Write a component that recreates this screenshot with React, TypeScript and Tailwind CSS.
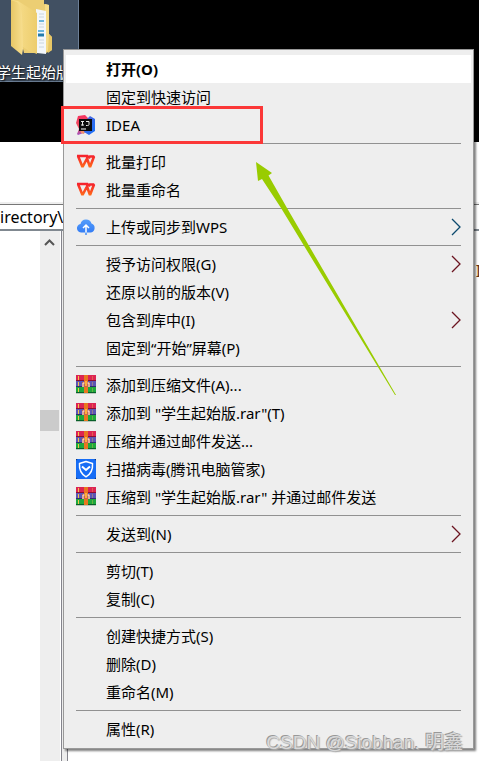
import { Fragment } from "react";
import type { ComponentType } from "react";

function IdeaIcon() {
  return (
    <svg viewBox="0 0 20 20" className="h-5 w-5" aria-hidden>
      <defs>
        <linearGradient id="idea-left" x1="0" y1="0" x2="0" y2="1">
          <stop offset="0" stopColor="#f5315f" />
          <stop offset="0.6" stopColor="#f0525f" />
          <stop offset="1" stopColor="#a04fc0" />
        </linearGradient>
        <linearGradient id="idea-right" x1="0" y1="0" x2="1" y2="1">
          <stop offset="0" stopColor="#5a62d8" />
          <stop offset="1" stopColor="#1372fb" />
        </linearGradient>
      </defs>
      <path d="M2 1 9 0l5 5-4 12-8 3-1-1 2-5-3-6z" fill="url(#idea-left)" />
      <path d="M4 15l5 1-1 3-3-1z" fill="#f3906c" />
      <path d="M11 4l3-3 5 3v12l-6 4-5-3z" fill="url(#idea-right)" />
      <rect x="3" y="4" width="13" height="12" fill="#0b0b0d" />
      <path
        d="M5 6.500h3M6.500 6v4.500M5 10h3M10 6.500h3v3q0 1-1.500 1H10"
        fill="none"
        stroke="#e8e8e8"
        strokeWidth="1"
      />
      <path d="M5 14h5" stroke="#fff" strokeWidth="1" />
    </svg>
  );
}

function WpsIcon() {
  return (
    <svg viewBox="0 0 20 20" className="h-5 w-5" aria-hidden>
      <defs>
        <linearGradient id="wps" x1="0" y1="0" x2="0" y2="1">
          <stop offset="0" stopColor="#f5222d" />
          <stop offset="1" stopColor="#ff6a1a" />
        </linearGradient>
      </defs>
      <path
        d="M1 4H12L11 6.500M2 4 6.500 15 11 6.500 14 15 18 4.500H13.500L12.800 6.500"
        fill="none"
        stroke="url(#wps)"
        strokeWidth="2.600"
        strokeLinejoin="bevel"
      />
    </svg>
  );
}

function CloudIcon() {
  return (
    <svg viewBox="0 0 20 20" className="h-5 w-5" aria-hidden>
      <defs>
        <linearGradient id="cloud" x1="0" y1="0" x2="0" y2="1">
          <stop offset="0" stopColor="#559dfb" />
          <stop offset="1" stopColor="#347df5" />
        </linearGradient>
      </defs>
      <path
        d="M6 15.500A4.300 4.300 0 0 1 4.500 7 5.700 5.700 0 0 1 15.500 6.500a4.700 4.700 0 0 1-0.500 9z"
        fill="url(#cloud)"
      />
      <path
        d="M10 16V8.500M7 11 10 8l3 3"
        fill="none"
        stroke="#fff"
        strokeWidth="1.500"
      />
      <path d="M10 15.500V18" stroke="#3f8cf9" strokeWidth="1.500" />
    </svg>
  );
}

function RarIcon() {
  return (
    <svg viewBox="0 0 20 20" className="h-5 w-5" aria-hidden>
      <rect y="0" width="20" height="6" fill="#dc2452" />
      <rect y="5" width="20" height="1" fill="#8f0d30" />
      <rect y="6" width="20" height="6" fill="#5d55b5" />
      <rect y="11" width="20" height="1" fill="#322c70" />
      <rect y="12" width="20" height="6" fill="#1fa83c" />
      <rect y="17" width="20" height="1" fill="#08602a" />
      <rect y="18" width="20" height="1" fill="#b9c8bd" />
      <path d="M2.500 1v4M2.500 7v4M2.500 13v4" stroke="#f3c64b" strokeWidth="1" />
      <path d="M16.500 1v4M16.500 7v4M16.500 13v4" stroke="#f3c64b" strokeWidth="1" opacity="0.35" />
      <rect x="8" width="4" height="18" fill="#e9761f" />
      <rect x="6" y="7" width="8" height="5" fill="#c9664a" />
      <path d="M7 12V8h1.500M11.500 8H13v4" fill="none" stroke="#f7f0ee" strokeWidth="1" />
      <path d="M10 6v5" stroke="#ffb03a" strokeWidth="2" />
    </svg>
  );
}

function ShieldIcon() {
  return (
    <svg viewBox="0 0 20 20" className="h-5 w-5" aria-hidden>
      <rect width="20" height="20" fill="#0b1d40" />
      <rect width="20" height="20" rx="2" fill="#176df5" />
      <path
        d="M10 2.500 16.500 4.500C17 11 15 15 10 17.800 5 15 3 11 3.500 4.500Z"
        fill="none"
        stroke="#fff"
        strokeWidth="1.500"
        strokeLinejoin="round"
      />
      <path
        d="M6 7.500 10 11 14 7.500"
        fill="none"
        stroke="#fff"
        strokeWidth="2"
      />
    </svg>
  );
}

function FolderIcon() {
  return (
    <svg viewBox="0 0 48 56" className="h-14 w-12 shrink-0" aria-hidden>
      <defs>
        <linearGradient id="folder-front" x1="0" y1="0" x2="1" y2="0">
          <stop offset="0" stopColor="#f9e192" />
          <stop offset="1" stopColor="#edcd6d" />
        </linearGradient>
        <linearGradient id="folder-side" x1="0" y1="0" x2="1" y2="0">
          <stop offset="0" stopColor="#e8c766" />
          <stop offset="1" stopColor="#f8df90" />
        </linearGradient>
      </defs>
      <path d="M1 0h33v4l5 1v29l3 3v13l-6 3H14z" fill="#ecce73" />
      <path d="M35 4l4 1v45l-4 2z" fill="#f6dc87" />
      <path d="M39 34l3 3v13l-4 3V50z" fill="#e8c766" />
      <path d="M26 9l10 2v43l-9-1z" fill="#f3f7fa" />
      <path
        d="M29 14h5M29 17h5M29 24h5M29 27h5M29 40h5M29 43h5M29 47h5"
        stroke="#c9d6e0"
        strokeWidth="1"
      />
      <path d="M29 21h5M28 31h6" stroke="#69b5dc" strokeWidth="2" />
      <path d="M28 35h6" stroke="#237cab" strokeWidth="3" />
      <path d="M1 0 8 1 27 13v41l-8-3-9-6z" fill="url(#folder-front)" />
      <path d="M1 0 7 2q4 4 5 13l1 34-1 6L1 46z" fill="url(#folder-side)" />
    </svg>
  );
}

interface MenuItem {
  label: string;
  icon?: ComponentType;
  submenu?: string;
  isDefault?: boolean;
}

const groups: MenuItem[][] = [
  [
    { label: "打开(O)", isDefault: true },
    { label: "固定到快速访问" },
    { label: "IDEA", icon: IdeaIcon },
  ],
  [
    { label: "批量打印", icon: WpsIcon },
    { label: "批量重命名", icon: WpsIcon },
  ],
  [{ label: "上传或同步到WPS", icon: CloudIcon, submenu: "text-[#0c4a6e]" }],
  [
    { label: "授予访问权限(G)", submenu: "text-[#6b1420]" },
    { label: "还原以前的版本(V)" },
    { label: "包含到库中(I)", submenu: "text-[#6b1420]" },
    { label: "固定到“开始”屏幕(P)" },
  ],
  [
    { label: "添加到压缩文件(A)...", icon: RarIcon },
    { label: '添加到 "学生起始版.rar"(T)', icon: RarIcon },
    { label: "压缩并通过邮件发送...", icon: RarIcon },
    { label: "扫描病毒(腾讯电脑管家)", icon: ShieldIcon },
    { label: '压缩到 "学生起始版.rar" 并通过邮件发送', icon: RarIcon },
  ],
  [{ label: "发送到(N)", submenu: "text-[#6b1420]" }],
  [{ label: "剪切(T)" }, { label: "复制(C)" }],
  [{ label: "创建快捷方式(S)" }, { label: "删除(D)" }, { label: "重命名(M)" }],
  [{ label: "属性(R)" }],
];

function MenuRow({ label, icon: Icon, submenu, isDefault }: MenuItem) {
  return (
    <button
      type="button"
      role="menuitem"
      className={`flex h-7 w-full items-center px-2.5 text-left whitespace-nowrap ${
        isDefault ? "bg-white font-bold" : ""
      }`}
    >
      <span className="mr-2.5 w-5 shrink-0">{Icon && <Icon />}</span>
      <span className="flex-1">{label}</span>
      {submenu && (
        <svg viewBox="0 0 10 18" className={`h-[18px] w-2.5 ${submenu}`} aria-hidden>
          <path d="M1 1l8 8-8 8" fill="none" stroke="currentColor" strokeWidth="1.3" />
        </svg>
      )}
    </button>
  );
}

function ContextMenu() {
  return (
    <div
      role="menu"
      className="absolute top-[49px] right-[5px] left-[63px] border border-[#999] bg-[#eee] px-0.5 py-[5px] text-[15px] leading-7 text-black shadow-[2px_2px_2px_rgba(0,0,0,0.5)]"
    >
      {groups.map((items, i) => (
        <Fragment key={items[0].label}>
          {i > 0 && <hr className="mx-2.5 my-1 border-t border-[#919191]" />}
          {items.map((item) => (
            <MenuRow key={item.label} {...item} />
          ))}
        </Fragment>
      ))}
    </div>
  );
}

function Desktop() {
  return (
    <div className="h-[142px] bg-black">
      <div className="flex h-[82px] w-[79px] flex-col border-r border-b border-[#6c7f96] bg-[#415062]">
        <div className="pl-2.5">
          <FolderIcon />
        </div>
        <span className="-ml-1 text-[15px] leading-8 whitespace-nowrap text-white [text-shadow:1px_1px_2px_#000]">
          学生起始版
        </span>
      </div>
    </div>
  );
}

function EditorWindow() {
  return (
    <div className="flex flex-1 flex-col bg-white">
      <div className="h-[63px] border-b border-[#777] shadow-[inset_0_-2px_0_#eee]" />
      <div className="h-[26px] border-b-2 border-[#808890] text-base leading-6 text-black">
        irectory\
      </div>
      <div className="flex flex-1">
        <div className="w-10" />
        <div className="flex w-5 flex-col bg-[#eee]">
          <svg viewBox="0 0 20 24" className="h-6 w-5" aria-hidden>
            <path d="M5 14l4.500-4.500L14 14" fill="none" stroke="#555" strokeWidth="2" />
          </svg>
          <div className="mt-[155px] mr-px h-[21px] bg-[#cbcbcb]" />
        </div>
        <div className="ml-px w-[7px] border-x border-[#85858d] bg-[#eee]" />
        <div className="flex-1 pt-7 text-right text-base leading-6 whitespace-nowrap text-[#6b3510]">
          <span className="-mr-3">In</span>
        </div>
      </div>
    </div>
  );
}

export default function App() {
  return (
    <div className="relative flex min-h-screen flex-col overflow-hidden bg-white font-['Noto_Sans','Noto_Sans_CJK_SC',sans-serif]">
      <Desktop />
      <EditorWindow />
      <ContextMenu />
      <div className="pointer-events-none absolute top-[106px] left-[61px] h-[38px] w-[202px] border-3 border-[#fb3737]" />
      <svg
        viewBox="0 0 140 234"
        className="pointer-events-none absolute top-[162px] left-[256px] h-[234px] w-[140px]"
        aria-hidden
      >
        <path d="M0 0 16 11 12.500 13.500 31 46 140 233 139 233 25 46 6 17 2 19Z" fill="#99cc00" />
      </svg>
      <p className="pointer-events-none absolute right-4 bottom-1.5 font-['Liberation_Sans','Noto_Sans_CJK_SC',sans-serif] text-[19px] leading-6 whitespace-nowrap text-[#d8d8d8] [text-shadow:-1px_-1px_0_#999,1px_1px_1px_#aaa]">
        CSDN @Siobhan. 明鑫
      </p>
    </div>
  );
}
